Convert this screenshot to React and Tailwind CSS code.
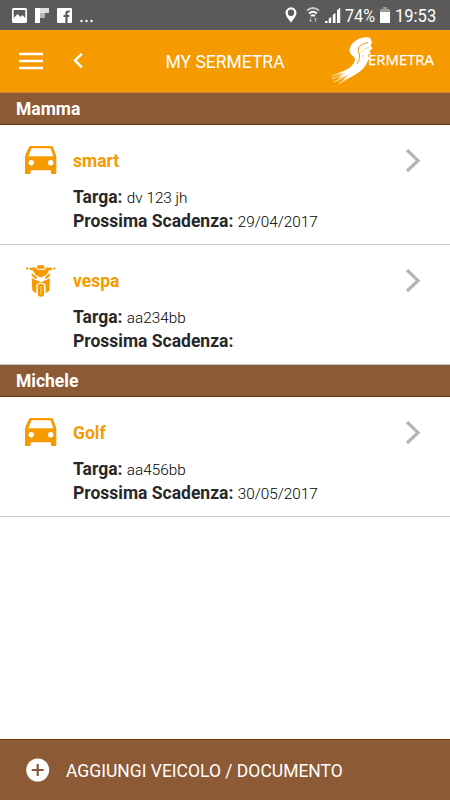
import React from "react";

const groups = [
  {
    owner: "Mamma",
    vehicles: [
      { name: "smart", type: "car", plate: "dv 123 jh", expiry: "29/04/2017" },
      { name: "vespa", type: "bike", plate: "aa234bb", expiry: "" },
    ],
  },
  {
    owner: "Michele",
    vehicles: [
      { name: "Golf", type: "car", plate: "aa456bb", expiry: "30/05/2017" },
    ],
  },
];

function CarIcon() {
  return (
    <svg width="32" height="30" viewBox="0 0 32 30" fill="#f59b00">
      <path
        fillRule="evenodd"
        d="M5.7 1h20.6q1.5 0 2 1.500L31.300 11v17q0 1-1 1h-3.400q-1 0-1-1v-2.800H5.600V28q0 1-1 1H1q-1 0-1-1V11L3.700 2.500Q4.200 1 5.700 1ZM6.500 3.300 3.300 11.200h25L25.500 3.300Z"
      />
      <circle cx="6.200" cy="17.700" r="2.700" fill="#fff" />
      <circle cx="25.700" cy="17.700" r="2.700" fill="#fff" />
    </svg>
  );
}

function BikeIcon() {
  return (
    <svg width="32" height="34" viewBox="0 0 32 34" fill="#f59b00">
      <path d="M12.500.5Q15.700-.4 19 .5L20 3.800H11.500Z" />
      <path d="M1 2.200l2.400.5-.3 2-2.200-.6ZM30.500 2.200l-2.400.5.3 2 2.200-.6Z" />
      <path d="M4.500 3 10 2.300 12 4.700h8l2-2.400 5.200.7v1.700L24 5.500 21.300 10 18.500 11.200 16 12.500 13.200 11.200 10.700 10 8 5.500 4.600 4.700Z" />
      <path d="M6.300 7.800 12 12.300 11.200 14Q7 13.300 6.300 7.800ZM25.500 7.800 19.800 12.300l.8 1.700q4.200-.7 4.900-6.200Z" />
      <path d="M6.700 13.300 16 17.300l8.900-4-.5 12.200-3.800 3v-8Q20 17.800 16 17.800t-4.700 2.700v8L7.300 25.500Z" />
      <rect x="12.700" y="18.800" width="6.300" height="13" rx="3" />
      <path d="M15.900 21v8.500" stroke="#fbd08a" strokeWidth="1" />
    </svg>
  );
}

function StatusBar() {
  return (
    <div className="flex h-[30px] items-center justify-between bg-[#5a5a5a] pr-[13px] pl-3 text-white">
      <div className="flex items-center gap-2">
        <svg width="15" height="15" viewBox="0 0 15 15">
          <rect width="15" height="15" rx="1.500" fill="#fff" />
          <path d="M1.700 2h11.600v8L10.500 7 8.500 9 5.500 6 1.700 10Z" fill="#5a5a5a" />
        </svg>
        <svg width="14" height="15" viewBox="0 0 14 15">
          <path d="M0 0h5v15H0Z" fill="#fff" />
          <path d="M5 0h9v5H5Z" fill="#ddd" />
          <path d="M5 5h5v5H5Z" fill="#b5b5b5" />
        </svg>
        <svg width="15" height="15" viewBox="0 0 15 15">
          <rect width="15" height="15" rx="1" fill="#fff" />
          <path
            d="M12.700 3.500H11Q9.500 3.500 9.500 5V15M6.500 8h5.700"
            fill="none"
            stroke="#5a5a5a"
            strokeWidth="2.200"
          />
        </svg>
        <svg width="13" height="15" viewBox="0 0 13 15" fill="#fff">
          <circle cx="1.500" cy="13" r="1.200" />
          <circle cx="6.500" cy="13" r="1.200" />
          <circle cx="11.500" cy="13" r="1.200" />
        </svg>
      </div>
      <div className="flex items-center">
        <svg width="12" height="16" viewBox="0 0 12 16" className="mr-[9px]">
          <path
            fillRule="evenodd"
            fill="#fff"
            d="M6 .3A5.500 5.500 0 0 0 .5 5.800C.5 9.500 6 15.500 6 15.500s5.500-6 5.500-9.700A5.500 5.500 0 0 0 6 .3Zm0 2.200a3.200 3.200 0 1 1 0 6.400 3.200 3.200 0 0 1 0-6.400Z"
          />
        </svg>
        <svg width="14" height="16" viewBox="0 0 14 16" fill="none">
          <path d="M1 3.500Q7-1.500 13 3.500" stroke="#ccc" strokeWidth="1.700" />
          <path d="M3 6.500Q7 3 11 6.500" stroke="#fff" strokeWidth="1.700" />
          <path d="M5 9Q7 7.500 9 9" stroke="#fff" strokeWidth="2" />
          <path d="M4.500 10.500v4M3 13l1.500 1.500L6 13M9.500 15v-4M8 12.500 9.500 11l1.500 1.500" stroke="#aaa" />
        </svg>
        <svg width="16" height="16" viewBox="0 0 16 16" fill="#fff" className="ml-[5px]">
          <path d="M0 16v-2h2.500v2ZM3.700 16v-4.500l2.500-1.500v6ZM7.800 16V7.800l2.700-1.800V16ZM12 16V3.500L15.200.5V16Z" />
        </svg>
        <span className="ml-[4px] w-[32px] pt-px text-[18px] leading-none whitespace-nowrap">
          <span className="inline-block origin-left scale-x-[0.900]">74%</span>
        </span>
        <svg width="10" height="16" viewBox="0 0 10 16" className="ml-[3px]">
          <path d="M3 0h4v2h3v3H0V2h3Z" fill="#999" />
          <path d="M0 5h10v11H0Z" fill="#fff" />
        </svg>
        <span className="ml-[5px] w-[42px] pt-px text-[18px] leading-none whitespace-nowrap">
          <span className="inline-block origin-left scale-x-[0.920]">19:53</span>
        </span>
      </div>
    </div>
  );
}

function Logo() {
  return (
    <svg width="106" height="52" viewBox="0 0 106 52" fill="none">
      <path
        d="M36 2.300C30 2 23 5.500 20 10.500 17.500 15 18.500 18.500 21.500 20.500 25 23 24.500 27 20 31.500 16 35 10 37.500 5 39.500L14 38 6 44 18 39.500 11 46 21 41.500C28 38 34 33 36 27.500L38.500 23 36.500 20.500 40 18.500 38.500 16 41.500 13.500 39.500 11 41 7.500 39.500 3.500Q38.500 2.300 36 2.300Z"
        fill="#fff"
      />
      <path d="M37 7.500Q30 8.500 27.500 13 26.500 16 28.500 20 29 25 26 29" stroke="#f59b00" strokeWidth="1" />
      <path d="M31 17.500Q33 13.500 38 12M32 19.500v4" stroke="#f59b00" strokeWidth=".8" strokeOpacity=".6" />
      <path d="M1 41 15 35.500M1 44 13 38.500M3 47 19 39.500M8 48.500 22 40" stroke="#fff" strokeOpacity=".6" strokeWidth="1.300" />
      <text
        x="37"
        y="29.500"
        fill="#fff"
        stroke="#fff"
        strokeWidth=".25"
        fontSize="14.500"
        textLength="66"
        lengthAdjust="spacingAndGlyphs"
        className="font-['Open_Sans',sans-serif]"
      >
        ERMETRA
      </text>
    </svg>
  );
}

function Header() {
  return (
    <header className="flex h-[63px] items-center border-b border-[#d28432] bg-[#f59b00] pl-[19px] text-white">
      <svg width="24" height="18" viewBox="0 0 24 18" fill="#fff">
        <path d="M0 .7h24v2.600H0ZM0 7.700h24v2.600H0ZM0 14.700h24v2.600H0Z" />
      </svg>
      <svg width="12" height="16" viewBox="0 0 12 16" className="ml-[29px]">
        <path d="M9.800.7 3 7.500l6.800 6.800" fill="none" stroke="#fff" strokeWidth="2.500" />
      </svg>
      <h1 className="ml-[81.500px] w-[165px] pt-0.5 text-[17.500px] whitespace-nowrap">MY SERMETRA</h1>
      <Logo />
    </header>
  );
}

function VehicleRow({ vehicle }) {
  return (
    <div className="flex h-[120px] border-b border-[#c8c8c8] pt-[20px] pl-[25px]">
      <div className="w-12">{vehicle.type === "car" ? <CarIcon /> : <BikeIcon />}</div>
      <div className="w-[331px] pt-1 text-[17.500px] text-[#282828]">
        <h3 className="h-[36px] leading-[24px] font-bold text-[#f59b00]">{vehicle.name}</h3>
        <p className="leading-[24px]">
          <b>Targa:</b> <span className="text-[15.300px] font-light text-black">{vehicle.plate}</span>
        </p>
        <p className="leading-[23px]">
          <b>Prossima Scadenza:</b>{" "}
          <span className="text-[15.300px] font-light text-black">{vehicle.expiry}</span>
        </p>
      </div>
      <svg width="18" height="28" viewBox="0 0 18 28" className="mt-[1px]">
        <path d="M3 4 14 14.700 3 25" fill="none" stroke="#b4b4b4" strokeWidth="3.200" />
      </svg>
    </div>
  );
}

export default function App() {
  return (
    <div className="flex h-[800px] w-[450px] flex-col overflow-hidden bg-white font-['Roboto',sans-serif]">
      <StatusBar />
      <Header />
      <main className="flex-1">
        {groups.map((group) => (
          <section key={group.owner}>
            <h2 className="h-8 border-b border-[#6b3010] bg-[#8c5a35] pl-4 text-[17.500px] leading-[32px] font-bold text-white">
              {group.owner}
            </h2>
            {group.vehicles.map((v) => (
              <VehicleRow key={v.name} vehicle={v} />
            ))}
          </section>
        ))}
      </main>
      <footer className="flex h-[61px] items-center border-t border-[#7b3f10] bg-[#8c5a35] pl-[26px] text-[17.500px] text-white">
        <svg width="24" height="24" viewBox="0 0 24 24">
          <circle cx="11.700" cy="12" r="11.500" fill="#fff" />
          <path d="M11.700 6v12M5.700 12h12" stroke="#8c5a35" strokeWidth="2.200" />
        </svg>
        <span className="ml-4 pt-0.5 whitespace-nowrap">AGGIUNGI VEICOLO / DOCUMENTO</span>
      </footer>
    </div>
  );
}
